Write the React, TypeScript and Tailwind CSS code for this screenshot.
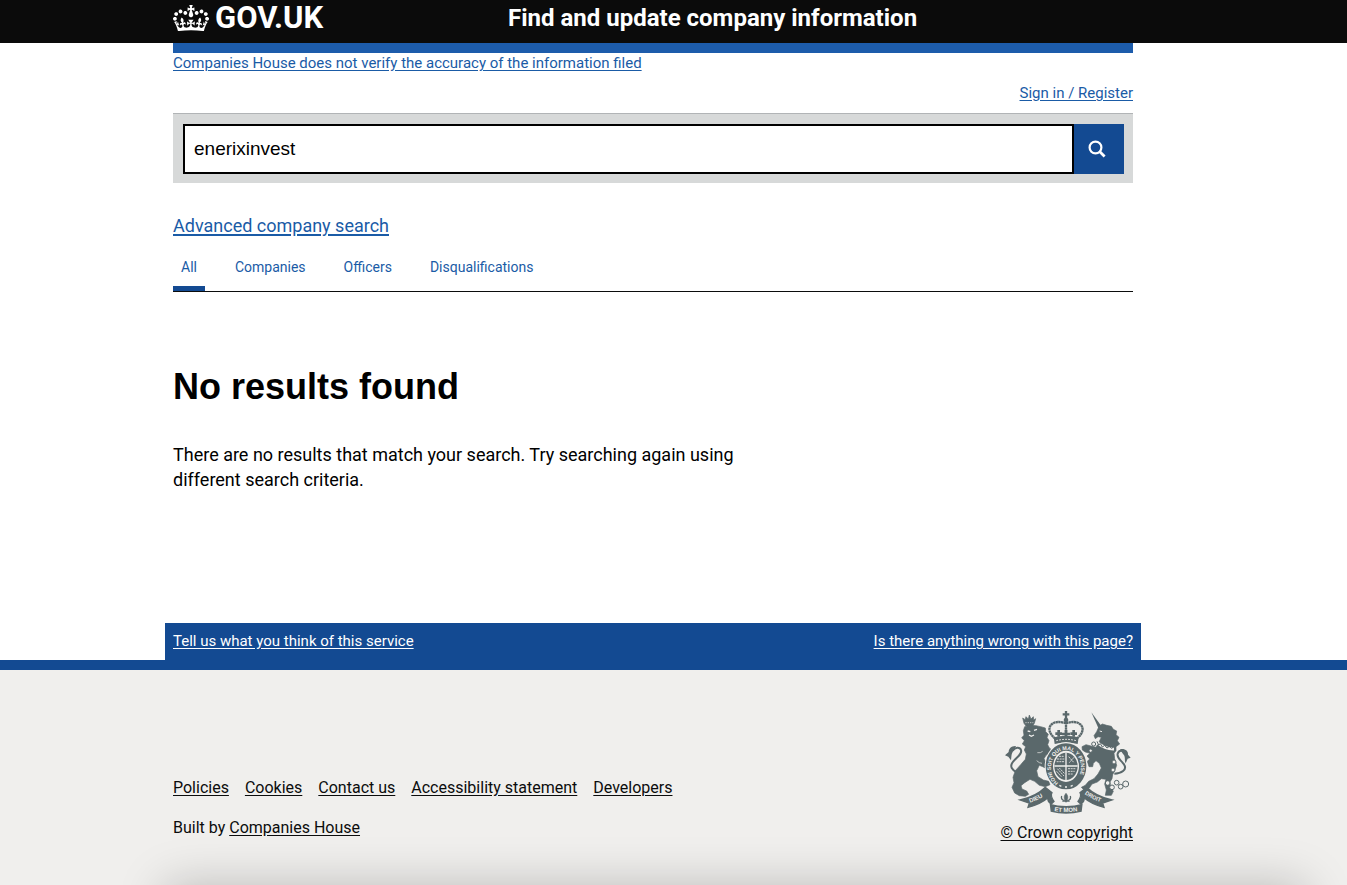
import React from "react";

const TABS = ["All", "Companies", "Officers", "Disqualifications"];
const FOOTER_LINKS = ["Policies", "Cookies", "Contact us", "Accessibility statement", "Developers"];

function Crown() {
  return (
    <svg viewBox="0 0 132 97" className="w-9 shrink-0" fill="currentColor" aria-hidden="true">
      <path
        fillRule="evenodd"
        d="M25 30.2c3.5 1.5 7.7-.2 9.1-3.7 1.5-3.6-.2-7.8-3.9-9.2-3.6-1.4-7.6.3-9.1 3.9-1.4 3.5.3 7.5 3.9 9zM9 39.5c3.6 1.5 7.8-.2 9.1-3.7 1.5-3.6-.2-7.8-3.9-9.1-3.6-1.5-7.6.2-9.1 3.8-1.4 3.5.3 7.5 3.9 9zM4.4 57.2c3.5 1.5 7.7-.2 9.1-3.8 1.5-3.6-.2-7.7-3.9-9.1-3.5-1.5-7.6.3-9.1 3.8-1.4 3.5.3 7.6 3.9 9.1zm38.3-21.4c3.5 1.5 7.7-.2 9.1-3.8 1.5-3.6-.2-7.7-3.9-9.1-3.6-1.5-7.6.3-9.1 3.8-1.3 3.6.4 7.7 3.9 9.1zm64.4-5.6c-3.6 1.5-7.8-.2-9.1-3.7-1.5-3.6.2-7.8 3.8-9.2 3.6-1.4 7.7.3 9.2 3.9 1.3 3.5-.4 7.5-3.9 9zm15.9 9.3c-3.6 1.5-7.7-.2-9.1-3.7-1.5-3.6.2-7.8 3.7-9.1 3.6-1.5 7.7.2 9.2 3.8 1.5 3.5-.3 7.5-3.8 9zm4.7 17.7c-3.6 1.5-7.8-.2-9.2-3.8-1.5-3.6.2-7.7 3.9-9.1 3.6-1.5 7.7.3 9.2 3.8 1.3 3.5-.4 7.6-3.9 9.1zM89.3 35.8c-3.6 1.5-7.8-.2-9.2-3.8-1.4-3.6.2-7.7 3.9-9.1 3.6-1.5 7.7.3 9.2 3.8 1.4 3.6-.3 7.7-3.9 9.1zM69.7 17.7l8.9 4.7V9.3l-8.9 2.8c-.2-.3-.5-.6-.9-.9L72.4 0H59.6l3.5 11.2c-.3.3-.6.5-.9.9l-8.8-2.8v13.1l8.8-4.7c.3.3.6.7.9.9l-5 15.4v.1c-.2.8-.4 1.6-.4 2.4 0 4.1 3.1 7.5 7 8.1h.2c.3 0 .7.1 1 .1.4 0 .7 0 1-.1h.2c4-.6 7.1-4.1 7.1-8.1 0-.8-.1-1.7-.4-2.4V34l-5.1-15.4c.4-.2.7-.6 1-.9zM66 92.8c16.9 0 32.8 1.1 47.1 3.2 4-16.9 8.9-26.7 14-33.5l-9.6-3.4c1 4.9 1.1 7.2 0 10.2-1.5-1.4-3-4.3-4.2-8.7L108.6 76c2.8-2 5-3.2 7.5-3.3-4.4 9.4-10 11.9-13.6 11.2-4.3-.8-6.3-4.6-5.6-7.9 1-4.7 5.7-5.9 8-.5 4.3-8.7-3-11.4-7.6-8.8 7.1-7.2 7.9-13.5 2.1-21.1-8 6.1-8.1 12.3-4.5 20.8-4.7-5.4-12.1-2.5-9.5 6.2 3.4-5.2 7.9-2 7.2 3.1-.6 4.3-6.4 7.8-13.5 7.2-10.3-.9-10.9-8-11.2-13.8 2.5-.5 7.1 1.8 11 7.3L80.2 60c-4.1 4.4-8 5.3-12.3 5.4 1.4-4.4 8-11.6 8-11.6H55.5s6.4 7.2 7.9 11.6c-4.2-.1-8-1-12.3-5.4l1.4 16.4c3.9-5.5 8.5-7.7 10.9-7.3-.3 5.8-.9 12.8-11.1 13.8-7.2.6-12.9-2.9-13.5-7.2-.7-5 3.8-8.3 7.1-3.1 2.7-8.7-4.6-11.6-9.4-6.2 3.7-8.5 3.6-14.7-4.6-20.8-5.8 7.6-5 13.9 2.2 21.1-4.7-2.6-11.9.1-7.7 8.8 2.3-5.5 7.1-4.2 8.1.5.7 3.3-1.3 7.1-5.7 7.9-3.5.7-9-1.8-13.5-11.2 2.5.1 4.7 1.3 7.5 3.3l-4.7-15.4c-1.2 4.4-2.7 7.2-4.3 8.7-1.1-3-.9-5.3 0-10.2l-9.5 3.4c5 6.9 9.9 16.7 14 33.5 14.8-2.1 30.8-3.2 47.7-3.2z"
      />
    </svg>
  );
}

function RoyalArms() {
  return (
    <svg viewBox="29 30 384 312" className="w-32 text-[#5a686b]" fill="none" stroke="currentColor" aria-hidden="true">
      {/* crown above the shield */}
      <g strokeWidth="5">
        <path d="M212 33v22M202 43h20" strokeWidth="7" />
        <circle cx="212" cy="60" r="7" fill="currentColor" stroke="none" />
        <path d="M180 116C164 104 156 86 168 74c12-12 34-8 44-4 10-4 32-8 44 4 12 12 4 30-12 42" strokeDasharray="7 1" strokeWidth="7" />
        <path d="M212 66v50" strokeDasharray="7 1" strokeWidth="7" />
        <path d="M190 90v20M180 101h20M235 90v20M225 101h20M212 90v22M200 102h24" strokeWidth="8" />
        <path d="M175 112q37-10 75 0l-3 20q-34-8-69 0z" fill="currentColor" stroke="none" />
        <path d="M183 122q29-8 60 0" stroke="#f0efed" strokeWidth="3" strokeDasharray="5 4" />
      </g>

      {/* lion */}
      <path d="M82 54l7 5 3-9 7 7 3-12 5 12 7-7 1 10 6-4-4 14-5 8H92l-6-8z" fill="currentColor" strokeWidth="2" />
      <path d="M90 68h24" stroke="#f0efed" strokeWidth="2" strokeDasharray="4 3" />
      <path
        d="M84 92L88 80L104 76L122 77L136 80L150 84L151 95L159 103L155 112L161 122L157 134L162 144L170 150L168 160L158 162L152 166L146 176L150 184L164 190L166 202L154 206L142 200L132 196L124 212L128 230L144 240L160 244L164 254L150 260L132 256L118 244L104 238L88 248L77 257L80 267L94 273L100 283L90 289L72 287L58 279L50 262L56 248L53 232L60 212L76 194L90 178L93 162L87 150L91 140L81 132L87 122L79 113L86 106Z"
        fill="currentColor"
        strokeWidth="2"
        strokeLinejoin="round"
      />
      <path d="M97 93l8 2M116 91l9-3M101 105l7 4 8-4" stroke="#f0efed" strokeWidth="4" />
      <path d="M126 158q10 2 16-4M124 182q8 8 16 8" stroke="#f0efed" strokeWidth="2" />
      <path d="M64 217C52 210 40 200 54 184c12-14 27-22 23-34-4-10-18-8-25 2" strokeWidth="6" />
      <path d="M62 138c-14-1-22 8-22 18l-11 10 10 4 8 11c2-12 0-20 8-29z" fill="currentColor" stroke="none" />

      {/* unicorn */}
      <path d="M288 37l30 41-9 6z" fill="currentColor" stroke="none" />
      <path
        d="M311 79L321 72L334 76L348 79L354 88L364 93L362 104L371 112L366 122L373 132L362 140L362 152L356 160L358 176L364 196L358 212L352 224L350 236L344 246L346 262L354 274L348 286L330 286L333 270L328 252L332 238L318 236L306 246L290 252L282 264L264 268L258 262L270 256L280 244L296 236L308 222L318 204L312 190L302 182L294 190L292 200L281 200L276 184L283 177L275 168L284 160L270 156L261 150L260 140L272 134L290 139L302 142L310 128L318 112L308 110L300 116L296 107L304 95Z"
        fill="currentColor"
        strokeWidth="2"
        strokeLinejoin="round"
      />
      <path d="M306 128q24 20 50 19" stroke="#f0efed" strokeWidth="9" />
      <path d="M305 124l5 11 5-4 6 10 7-5 7 8 7-5 7 6 8-6" strokeWidth="3" />
      <path d="M313 93l7 2" stroke="#f0efed" strokeWidth="3" />
      <path d="M357 221c22 0 38-12 30-26-7-13-24-20-20-34 3-10 16-12 20-2" strokeWidth="6" />
      <path d="M374 148c15-3 25 5 24 16l8 9-9 3-6 14c-5-11 1-20-8-28z" fill="currentColor" stroke="none" />
      <g strokeWidth="3" fill="#f0efed">
        <circle cx="295" cy="132" r="6" />
        <circle cx="286" cy="152" r="5" />
        <circle cx="356" cy="186" r="6" />
        <circle cx="353" cy="210" r="6" />
        <circle cx="337" cy="249" r="7" />
        <circle cx="350" cy="262" r="7" />
        <circle cx="364" cy="248" r="7" />
        <circle cx="376" cy="260" r="7" />
        <circle cx="391" cy="252" r="9" />
      </g>

      {/* garter and shield */}
      <ellipse cx="212" cy="199" rx="64" ry="73" fill="#f0efed" stroke="none" />
      <ellipse cx="212" cy="199" rx="50" ry="58" strokeWidth="22" />
      <path id="garter" d="M190 249A45 53 0 1 1 234 249" stroke="none" />
      <text fill="#f0efed" stroke="none" fontFamily="Liberation Sans" fontWeight="700" fontSize="16">
        <textPath href="#garter" startOffset="1">HONI SOIT QUI MAL Y PENSE</textPath>
      </text>
      <path d="M192 256l6 3M209 261h6M226 259l6-3" stroke="#f0efed" strokeWidth="4" />
      <ellipse cx="212" cy="199" rx="35" ry="41" fill="currentColor" stroke="none" />
      <path d="M212 158v82M177 198h70" stroke="#f0efed" strokeWidth="4" />
      <path
        d="M185 177h22M184 185h22M191 169h16M220 170l16 18M236 172l-14 16M186 206l20 22M184 214l14 16M192 204l15 16M218 206h22M218 214h20M218 222h15"
        stroke="#f0efed"
        strokeWidth="2.5"
        strokeDasharray="6 2"
      />

      {/* motto scroll */}
      <path d="M74 300Q122 290 150 262L170 278Q164 288 176 304L168 312Q156 306 158 293Q136 312 98 322L102 309Z" fill="currentColor" strokeWidth="4" />
      <path d="M350 300Q302 290 274 262L254 278Q260 288 248 304L256 312Q268 306 266 293Q288 312 326 322L322 309Z" fill="currentColor" strokeWidth="4" />
      <path d="M163 311q49 14 99 0l-3 24q-47 12-93 0z" fill="currentColor" stroke="none" />
      <path id="motto-left" d="M102 309Q132 300 160 278" stroke="none" />
      <path id="motto-mid" d="M171 332Q212 341 258 331" stroke="none" />
      <path id="motto-right" d="M267 281Q294 302 330 310" stroke="none" />
      <g fill="#f0efed" stroke="none" fontFamily="Liberation Sans" fontWeight="700" fontSize="18">
        <text><textPath href="#motto-left" startOffset="2">DIEU</textPath></text>
        <text><textPath href="#motto-mid" startOffset="6">ET MON</textPath></text>
        <text fontSize="17"><textPath href="#motto-right" startOffset="1">DROIT</textPath></text>
      </g>
      <path d="M212 280c-7 9-7 15 0 27 7-12 7-18 0-27z" fill="currentColor" strokeWidth="2" />
      <path d="M207 302c-8-2-10-8-8-14M217 302c8-2 10-8 8-14M201 303h22" strokeWidth="4" />
    </svg>
  );
}

export default function App() {
  return (
    <div className="flex min-h-screen flex-col overflow-x-hidden bg-white font-['Roboto',sans-serif] text-[15px] leading-5 text-[#0b0c0c]">
      <header className="bg-[#0b0b0b] pr-[41px] text-white">
        <div className="mx-auto flex h-[43px] max-w-[960px] items-start">
          <a href="#home" className="flex w-[335px] items-center gap-1.5 pt-0.5" aria-label="GOV.UK">
            <Crown />
            <span className="text-[31px] leading-8 font-bold">GOV.UK</span>
          </a>
          <a href="#service" className="pt-0.5 text-2xl leading-8 font-bold">
            Find and update company information
          </a>
        </div>
      </header>

      <main className="grow pr-[41px]">
        <div className="mx-auto max-w-[960px]">
          <div className="h-[10px] bg-[#1d5cab]" />
          <a href="#accuracy" className="block w-fit text-[#1a5ba6] underline underline-offset-2">
            Companies House does not verify the accuracy of the information filed
          </a>
          <div className="flex justify-end pt-[10px] pb-[10px]">
            <a href="#signin" className="text-[#1a5ba6] underline underline-offset-2">
              Sign in / Register
            </a>
          </div>

          <form className="flex border-t border-[#b1b4b6] bg-[#d7d9d9] px-[10px] pt-[10px] pb-[9px]" onSubmit={(e) => e.preventDefault()}>
            <input
              aria-label="Search companies and officers"
              defaultValue="enerixinvest"
              className="h-[50px] min-w-0 grow border-2 border-black bg-white px-[9px] font-['Liberation_Sans',sans-serif] text-[19px] text-black outline-none"
            />
            <button type="submit" aria-label="Search" className="mr-[-1px] flex h-[50px] w-[50px] items-center justify-center bg-[#134a92] pr-1 text-white">
              <svg viewBox="0 0 18 18" className="w-[18px]" fill="none" stroke="currentColor" strokeWidth="2.2" aria-hidden="true">
                <circle cx="7.5" cy="7.5" r="5.9" />
                <path d="M11.6 11.6l5 5" strokeWidth="2.8" />
              </svg>
            </button>
          </form>

          <a href="#advanced" className="mt-[31px] block w-fit text-lg leading-6 text-[#1a5ba6] underline decoration-2 underline-offset-2">
            Advanced company search
          </a>

          <nav className="mt-[13px] flex gap-[22px] border-b border-[#0b0c0c]" aria-label="Result type">
            {TABS.map((t, i) => (
              <a
                key={t}
                href={`#${t}`}
                className={`border-b-[5px] px-2 pt-1 pb-[7px] text-sm leading-6 text-[#1a5ba6] ${i === 0 ? "border-[#134a92]" : "border-transparent"}`}
              >
                {t}
              </a>
            ))}
          </nav>

          <h1 className="mt-[74px] font-['Liberation_Sans',sans-serif] text-4xl leading-[42px] font-bold text-black">No results found</h1>
          <p className="mt-[34px] max-w-[600px] text-lg leading-[25px] text-black">
            There are no results that match your search. Try searching again using different search criteria.
          </p>
        </div>
      </main>

      <div className="pr-[41px]">
        <div className="mx-auto flex max-w-[976px] justify-between bg-[#134a92] px-2 pt-2 pb-[9px] text-white">
          <a href="#feedback" className="underline underline-offset-2">Tell us what you think of this service</a>
          <a href="#problem" className="underline underline-offset-2">Is there anything wrong with this page?</a>
        </div>
      </div>

      <footer className="relative overflow-hidden border-t-[10px] border-[#134a92] bg-[#f0efed] pr-[41px] text-base leading-5">
        <div className="mx-auto flex h-[215px] max-w-[960px] justify-between pt-10">
          <div className="pt-[68px]">
            <ul className="flex gap-4">
              {FOOTER_LINKS.map((l) => (
                <li key={l}>
                  <a href={`#${l}`} className="underline underline-offset-2">{l}</a>
                </li>
              ))}
            </ul>
            <p className="mt-5">
              Built by <a href="#ch" className="underline underline-offset-2">Companies House</a>
            </p>
          </div>
          <a href="#copyright" className="flex flex-col items-end gap-[9px]">
            <RoyalArms />
            <span className="underline underline-offset-2">© Crown copyright</span>
          </a>
        </div>
        <div className="absolute top-full right-[41px] left-[165px] h-20 shadow-[0_0_48px_rgba(0,0,0,0.22)]" />
      </footer>
    </div>
  );
}
